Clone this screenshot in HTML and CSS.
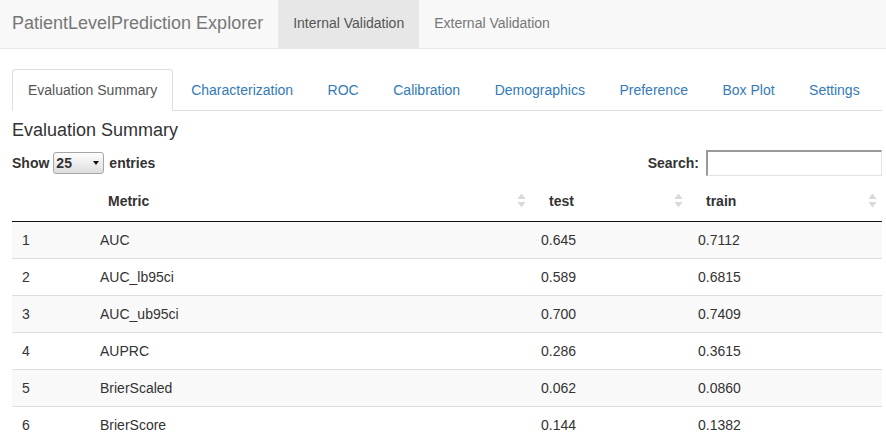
FILE: index.html
```html
<!DOCTYPE html>
<html>
<head>
<meta charset="utf-8">
<title>PatientLevelPrediction Explorer</title>
<link rel="stylesheet" href="styles.css">
</head>
<body>
<nav class="navbar">
  <div class="brand">PatientLevelPrediction Explorer</div>
  <ul class="navlinks">
    <li class="active"><a>Internal Validation</a></li>
    <li><a>External Validation</a></li>
  </ul>
</nav>
<main class="content">
  <ul class="tabs">
    <li class="active"><a>Evaluation Summary</a></li>
    <li><a>Characterization</a></li>
    <li><a>ROC</a></li>
    <li><a>Calibration</a></li>
    <li><a>Demographics</a></li>
    <li><a>Preference</a></li>
    <li><a>Box Plot</a></li>
    <li><a>Settings</a></li>
  </ul>
  <h4 class="title">Evaluation Summary</h4>
  <div class="dt-top">
    <label class="dt-length">Show <span class="select-box"><span class="sel-val">25</span><span class="sel-arrow"></span></span> entries</label>
    <label class="dt-filter">Search: <input class="search" type="text"></label>
  </div>
  <table class="dt">
    <colgroup>
      <col class="c-idx"><col class="c-metric"><col class="c-test"><col class="c-train">
    </colgroup>
    <thead>
      <tr>
        <th class="th-idx"></th>
        <th><div class="th-in"><span>Metric</span><svg class="sort" viewBox="0 0 9 15" width="9" height="15"><polygon points="4.5,0.5 8.5,6 0.5,6"/><polygon points="0.5,9 8.5,9 4.5,14.5"/></svg></div></th>
        <th><div class="th-in"><span>test</span><svg class="sort" viewBox="0 0 9 15" width="9" height="15"><polygon points="4.5,0.5 8.5,6 0.5,6"/><polygon points="0.5,9 8.5,9 4.5,14.5"/></svg></div></th>
        <th><div class="th-in"><span>train</span><svg class="sort" viewBox="0 0 9 15" width="9" height="15"><polygon points="4.5,0.5 8.5,6 0.5,6"/><polygon points="0.5,9 8.5,9 4.5,14.5"/></svg></div></th>
      </tr>
    </thead>
    <tbody>
      <tr><td>1</td><td>AUC</td><td>0.645</td><td>0.7112</td></tr>
      <tr><td>2</td><td>AUC_lb95ci</td><td>0.589</td><td>0.6815</td></tr>
      <tr><td>3</td><td>AUC_ub95ci</td><td>0.700</td><td>0.7409</td></tr>
      <tr><td>4</td><td>AUPRC</td><td>0.286</td><td>0.3615</td></tr>
      <tr><td>5</td><td>BrierScaled</td><td>0.062</td><td>0.0860</td></tr>
      <tr><td>6</td><td>BrierScore</td><td>0.144</td><td>0.1382</td></tr>
    </tbody>
  </table>
</main>
</body>
</html>
```

FILE: styles.css
```css
html, body {
  margin: 0;
  padding: 0;
}
body {
  font-family: "Liberation Sans", Arial, sans-serif;
  font-size: 14px;
  line-height: 20px;
  color: #333;
  background: #fff;
  overflow: hidden;
}
.navbar {
  display: flex;
  height: 48px;
  background: #f8f8f8;
  border-bottom: 1px solid #e7e7e7;
}
.brand {
  padding: 13px 15px 0 12px;
  font-size: 18px;
  line-height: 20px;
  color: #777;
}
.navlinks {
  display: flex;
  list-style: none;
  margin: 0;
  padding: 0;
}
.navlinks a {
  display: block;
  height: 48px;
  box-sizing: border-box;
  padding: 13px 15px 0;
  color: #777;
}
.navlinks .active a {
  background: #e7e7e7;
  color: #555;
}
.content {
  padding: 0 4px 0 12px;
}
.tabs {
  display: flex;
  list-style: none;
  margin: 20px 0 0;
  padding: 0;
  border-bottom: 1px solid #ddd;
}
.tabs li {
  margin-bottom: -1px;
}
.tabs a {
  display: block;
  padding: 10px 15px;
  margin-right: 2.5px;
  border: 1px solid transparent;
  border-radius: 4px 4px 0 0;
  color: #337ab7;
  line-height: 20px;
}
.tabs .active a {
  color: #555;
  background: #fff;
  border-color: #ddd #ddd transparent;
  margin-right: 2px;
}
.title {
  margin: 10px 0 9px;
  font-size: 18px;
  font-weight: 500;
  line-height: 1.1;
  color: #333;
}
.dt-top {
  display: flex;
  justify-content: space-between;
  align-items: center;
  height: 26px;
}
.dt-length, .dt-filter {
  display: flex;
  align-items: center;
  font-weight: bold;
  color: #333;
}
.select-box {
  display: inline-flex;
  align-items: center;
  justify-content: space-between;
  box-sizing: border-box;
  width: 51px;
  height: 22px;
  margin: 0 5px 0 4px;
  padding: 0 4px 0 2px;
  border: 1px solid #a6a6a6;
  border-radius: 3px;
  background: linear-gradient(#fdfdfd, #dedede);
}
.sel-val {
  font-weight: bold;
  color: #333;
}
.sel-arrow {
  width: 0;
  height: 0;
  border-left: 3.5px solid transparent;
  border-right: 3.5px solid transparent;
  border-top: 4px solid #111;
}
.search {
  box-sizing: border-box;
  width: 176px;
  height: 26px;
  margin: 0 0 0 7px;
  padding: 0 2px;
  border-style: solid;
  border-width: 2px 1px 1px 2px;
  border-color: #9a9a9a #e3e3e3 #e3e3e3 #9a9a9a;
  background: #fff;
  font-family: inherit;
  font-size: 14px;
}
.dt {
  width: 100%;
  margin-top: 5px;
  border-collapse: collapse;
  table-layout: fixed;
}
.c-idx { width: 78px; }
.c-metric { width: 441px; }
.c-test { width: 157px; }
.c-train { width: auto; }
.dt th {
  padding: 10px 5px 10px 18px;
  text-align: left;
  font-weight: bold;
  line-height: 20px;
  border-bottom: 1px solid #111;
}
.dt .th-idx {
  padding: 10px 18px;
}
.th-in {
  display: flex;
  justify-content: space-between;
  align-items: center;
  height: 20px;
}
.sort {
  fill: #d9d9d9;
}
.dt td {
  padding: 8px 10px;
  line-height: 20px;
  border-top: 1px solid #ddd;
}
.dt tbody tr:first-child td {
  border-top: none;
}
.dt tbody tr:nth-child(odd) {
  background: #f9f9f9;
}
```
